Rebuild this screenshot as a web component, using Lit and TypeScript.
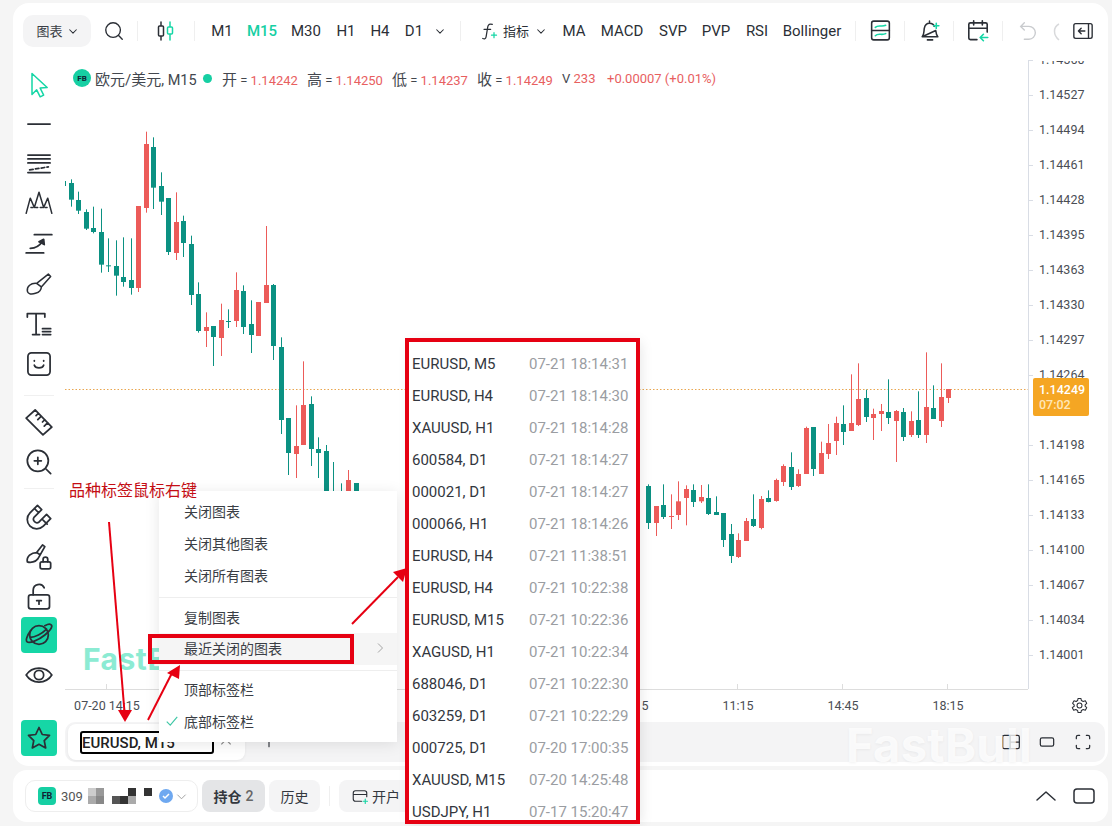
import { LitElement, html, css, svg } from "lit";
import { customElement } from "lit/decorators.js";

type C = [number, number, number, number, number, number];
// x, wickTop, bodyTop, bodyBottom, wickBottom, 1=up(red), in 3x crop coordinates
const A: C[] = [
[34,178,189,239,260,0],[55,215,240,272,282,0],[79,268,276,326,330,0],[100,260,324,336,340,0],[124,266,336,434,458,0],[145,355,436,438,456,0],[169,361,438,467,527,0],[190,352,471,486,500,0],[214,355,480,504,524,0],[235,258,258,504,516,1],[259,35,72,264,278,1],[280,52,81,203,267,0],[304,157,198,245,285,0],[325,234,234,396,405,0],[349,217,306,399,420,1],[370,287,303,369,411,0],[394,347,372,525,555,0],[415,487,522,633,638,0],[439,577,621,633,681,1],[460,618,618,651,738,0],[484,551,600,654,708,1],[505,568,603,605,624,0],[529,457,510,603,621,1],[550,496,513,621,642,0],[574,541,612,645,699,0],[595,546,546,648,648,1],[619,318,495,549,549,1],[640,492,495,678,720,0],[664,652,681,900,942,0],[685,894,894,999,1065,0],[709,856,978,1002,1074,1],[730,724,855,975,975,1],[754,829,852,987,1038,0],[775,952,987,999,1074,0],[799,975,993,1140,1160,0],[820,1026,1150,1160,1180,0],[844,1090,1150,1160,1180,0],[865,1050,1080,1140,1160,1],[889,1089,1089,1140,1160,0]];
const B: C[] = [
[55,433,438,549,567,0],[79,498,498,549,588,1],[100,433,495,531,537,0],[124,463,528,530,567,1],[145,424,484,525,540,1],[169,436,447,474,556,1],[190,433,450,486,501,0],[214,435,471,484,489,1],[235,433,474,522,525,0],[259,469,516,525,525,0],[280,519,519,600,621,0],[304,552,582,648,669,0],[325,580,600,651,654,1],[349,534,543,603,603,1],[370,463,537,558,561,0],[394,468,477,564,568,1],[415,451,474,486,487,0],[439,416,420,483,485,1],[460,373,378,426,438,1],[484,337,381,441,450,0],[505,388,402,438,441,1],[529,260,264,402,402,1],[550,261,261,387,408,0],[574,305,339,402,402,1],[595,252,309,342,357,1],[619,230,249,303,345,1],[640,196,252,276,315,0],[664,103,249,273,273,1],[685,70,177,255,258,1],[709,149,174,231,246,0],[730,206,222,234,300,1],[754,192,213,222,273,1],[775,118,216,234,252,0],[799,210,213,243,366,1],[820,204,216,291,303,0],[844,214,243,285,291,1],[865,154,240,285,294,0],[889,37,201,285,309,1],[910,136,204,237,237,0],[934,70,171,243,261,1],[955,147,147,174,189,1]];

const candle = (c: C, ox: number, oy: number) => {
  const x = Math.round(ox + c[0] / 3) + 0.5;
  const col = c[5] ? "#ec5b59" : "#0b9182";
  const y = (v: number) => oy + v / 3;
  return svg`<line x1=${x} x2=${x} y1=${y(c[1])} y2=${y(c[4])} stroke=${col} stroke-width="1"/><rect x=${x - 2.5} y=${y(c[2])} width="5" height=${Math.max(1, (c[3] - c[2]) / 3)} fill=${col}/>`;
};

const prices = [["1.14560",60],["1.14527",95],["1.14494",130],["1.14461",165],["1.14428",200],["1.14395",235],["1.14363",270],["1.14330",305],["1.14297",340],["1.14264",375],["1.14198",445],["1.14165",480],["1.14133",515],["1.14100",550],["1.14067",585],["1.14034",620],["1.14001",655]] as [string, number][];

const recent = [["EURUSD, M5","07-21 18:14:31"],["EURUSD, H4","07-21 18:14:30"],["XAUUSD, H1","07-21 18:14:28"],["600584, D1","07-21 18:14:27"],["000021, D1","07-21 18:14:27"],["000066, H1","07-21 18:14:26"],["EURUSD, H4","07-21 11:38:51"],["EURUSD, H4","07-21 10:22:38"],["EURUSD, M15","07-21 10:22:36"],["XAGUSD, H1","07-21 10:22:34"],["688046, D1","07-21 10:22:30"],["603259, D1","07-21 10:22:29"],["000725, D1","07-20 17:00:35"],["XAUUSD, M15","07-20 14:25:48"],["USDJPY, H1","07-17 15:20:47"]];

const ic = (w: number, body: unknown) => html`<svg class="ic" width=${w} height=${w} viewBox="0 0 24 24" fill="none" stroke="#2b2f36" stroke-width="1.5" stroke-linecap="round" stroke-linejoin="round">${body}</svg>`;
const TEAL = "#16d6a6";
const chev = svg`<path d="M4 9l8 8 8-8" stroke-width="2.500"/>`;

@customElement("app-root")
export class AppRoot extends LitElement {
  static styles = css`
    :host { display: block; position: relative; width: 1112px; height: 826px; overflow: hidden; background: #f5f5f5; font-family: Roboto, "Noto Sans CJK SC", sans-serif; color: #2b2f36; }
    .page { display: flex; flex-direction: column; gap: 4px; padding: 3px 4px 4px 13px; height: 826px; box-sizing: border-box; }
    .main { flex: none; height: 763px; background: #fff; border-radius: 16px; display: flex; flex-direction: column; overflow: hidden; }
    .toolbar { flex: none; height: 54px; display: flex; align-items: center; font-size: 15px; padding: 1px 0 0 10px; box-sizing: border-box; }
    .t { flex: none; display: flex; align-items: center; justify-content: center; height: 32px; box-sizing: border-box; white-space: nowrap; }
    .chartbtn { width: 68px; background: #f4f4f5; border-radius: 10px; gap: 5px; font-size: 13px; color: #3a3e45; }
    .sep { flex: none; width: 1px; height: 20px; background: #efefef; }
    .teal { color: #16cfa3; font-weight: 500; }
    .w46 { width: 46px; } .w56 { width: 56px; } .w48 { width: 48px; } .w49 { width: 49px; }
    .gap7 { width: 7px; } .gap10 { width: 10px; } .gap8 { width: 8px; } .gap9 { width: 9px; }
    .more { width: 20px; }
    .fx { width: 42px; justify-content: flex-end; padding-right: 4px; }
    .ind { width: 43px; justify-content: flex-start; gap: 7px; font-size: 13px; }
    .redo { width: 10px; justify-content: flex-start; overflow: hidden; }
    .collapse { width: 32px; justify-content: flex-end; }
    .body { flex: 1; display: flex; min-height: 0; }
    .tools { flex: none; width: 52px; padding-top: 7px; display: flex; flex-direction: column; align-items: center; box-sizing: border-box; }
    .tool { flex: none; width: 36px; height: 40px; display: flex; align-items: center; justify-content: center; }
    .tool.active { height: 36px; margin: 1px 0 2px; background: #16d6a6; border-radius: 4px; }
    .mt6 { margin-top: 6px; } .mt7 { margin-top: 7px; }
    .tsep { flex: none; width: 30px; height: 1px; background: #f0f0f0; margin-top: 6px; }
    .tsep.first { margin-top: 11px; }
    .chart { flex: 1; position: relative; }
    .chart svg.plot { position: absolute; left: -65px; top: -57px; width: 1112px; height: 826px; overflow: visible; pointer-events: none; }
    .legend { position: absolute; left: 8px; top: 12px; display: flex; align-items: center; font-size: 13px; white-space: nowrap; color: #43474e; height: 18px; }
    .z { font-size: 15px; }
    .fb { flex: none; width: 18px; height: 18px; border-radius: 50%; background: #16cfa3; color: #123; font-size: 8px; font-weight: 700; display: flex; align-items: center; justify-content: center; margin-right: 4px; }
    .name { flex: none; width: 102px; font-size: 14.5px; }
    .dot { flex: none; width: 9px; height: 9px; border-radius: 50%; background: #16cfa3; margin: 0 10px 0 6px; }
    .legend b { font-weight: 400; color: #e8605f; }
    .g { flex: none; width: 85px; }
    .g.v { width: 45px; }
    .mark { position: absolute; left: 18px; top: 584px; font: 700 30px Inter, sans-serif; color: #8cebd3; letter-spacing: 0.5px; white-space: nowrap; }
    .ptag { position: absolute; left: 968px; top: 321px; width: 56px; height: 38px; background: #f5a623; color: #fff; font-size: 12.5px; font-weight: 500; line-height: 15px; padding: 4px 0 0 6px; box-sizing: border-box; border-radius: 2px; }
    .ptag span { color: #ffe6b8; }
    .labels { position: absolute; left: 970px; top: 4px; width: 56px; height: 630px; overflow: hidden; }
    .plabel { position: absolute; left: 4px; font-size: 12.5px; color: #4a4e55; line-height: 14px; }
    .tlabel { position: absolute; top: 641px; font-size: 12.5px; color: #4a4e55; transform: translateX(-50%); white-space: nowrap; }
    .gear { position: absolute; left: 1006px; top: 640px; }
    .tabrow { flex: none; height: 44px; display: flex; align-items: flex-start; }
    .star { flex: none; width: 36px; height: 36px; margin: -2px 8px 0; background: #16d6a6; border-radius: 4px; display: flex; align-items: center; justify-content: center; }
    .tabstrip { flex: 1; height: 40px; margin-right: 3px; background: #f4f4f5; border-radius: 10px; display: flex; align-items: center; padding-left: 3px; }
    .tab { flex: none; width: 177px; height: 36px; background: #fff; border-radius: 8px; display: flex; align-items: center; padding-left: 12px; box-sizing: border-box; box-shadow: 0 1px 3px rgba(0,0,0,.06); }
    .tabname { width: 134px; height: 23px; box-sizing: border-box; border: 2px solid #000; border-radius: 3px; font-size: 15px; font-weight: 500; line-height: 20px; margin-right: 5px; color: #222; white-space: nowrap; overflow: hidden; }
    .plus { flex: none; margin-left: 15px; }
    .spacer { flex: 1; }
    .tabicons { display: flex; gap: 16px; margin-right: 12px; }
    .bottom { flex: none; height: 52px; background: #fff; border-radius: 14px; display: flex; align-items: center; padding: 0 12px; gap: 4px; }
    .acct { flex: none; width: 173px; height: 32px; border: 1px solid #eee; border-radius: 10px; box-sizing: border-box; display: flex; align-items: center; padding-left: 12px; position: relative; font-size: 13px; color: #555; }
    .badge { position: absolute; left: 132px; top: 7px; }
    .achev { position: absolute; left: 150px; top: 10px; }
    .fbs { flex: none; width: 18px; height: 18px; border-radius: 4px; background: #16cfa3; color: #123; font-size: 9px; font-weight: 700; display: flex; align-items: center; justify-content: center; margin-right: 5px; }
    .mosaic { display: grid; grid-template-columns: repeat(9, 8px); grid-auto-rows: 8px; margin-left: 5px; }
    .btn { flex: none; height: 32px; border-radius: 8px; background: #f4f4f5; display: flex; align-items: center; justify-content: center; font-size: 14px; color: #33373e; }
    .btn.on { width: 63px; background: #e4e5e7; font-weight: 700; gap: 4px; }
    .btn.on span { font-weight: 500; color: #666; }
    .hist { width: 51px; }
    .bsep { margin: 0 5px; }
    .open { width: 100px; gap: 3px; justify-content: flex-start; padding-left: 12px; box-sizing: border-box; }
    .gap14 { flex: none; width: 6px; }
    .menu { position: absolute; left: 159px; top: 491px; width: 238px; height: 251px; background: #fff; box-shadow: 0 2px 14px rgba(0,0,0,.1); font-size: 14px; color: #3a3e45; padding-top: 5px; box-sizing: border-box; }
    .mi { height: 32px; display: flex; align-items: center; padding: 0 0 2px 25px; box-sizing: border-box; position: relative; }
    .mi.short { height: 31px; }
    .mi.hov { background: #f5f5f5; }
    .mi svg { position: absolute; }
    .marrow { left: 215px; top: 9px; }
    .mcheck { left: 6px; top: 8px; }
    .msep { height: 1px; background: #eee; margin: 5px 0 4px; }
    .msep.a { margin: 5px 0 3px; }
    .sub { position: absolute; left: 407px; top: 340px; width: 231px; height: 482px; background: #fff; box-shadow: 3px 2px 12px rgba(0,0,0,.1); font-size: 15px; overflow: hidden; padding-top: 8px; box-sizing: border-box; }
    .si { height: 32px; display: flex; align-items: center; padding-left: 5px; white-space: nowrap; color: #33373e; }
    .si span:first-child { width: 117px; }
    .si span:last-child { color: #9a9da2; }
    .rbox { position: absolute; box-sizing: border-box; border: 4px solid #e60012; }
    .r1 { left: 405px; top: 338px; width: 235px; height: 486px; }
    .r2 { left: 148px; top: 634px; width: 206px; height: 30px; }
    .note { position: absolute; left: 69px; top: 481px; font-size: 16px; line-height: 20px; color: #c40d14; }
    .over { position: absolute; left: 0; top: 0; width: 1112px; height: 826px; pointer-events: none; }
    .wm { position: absolute; left: 846px; top: 716px; font: 700 47px Inter, sans-serif; color: rgba(255,255,255,.8); text-shadow: 0 1px 3px rgba(0,0,0,.05); letter-spacing: .3px; white-space: nowrap; }
  `;

  private tool(body: unknown, cls = "") {
    return html`<div class="tool ${cls}">${ic(28, body)}</div>`;
  }

  render() {
    const tf = [["M1",40],["M15",40,1],["M30",48],["H1",32],["H4",36],["D1",32]] as [string, number, number?][];
    const ind = [["MA",40],["MACD",56],["SVP",46],["PVP",40],["RSI",42],["Bollinger",68]] as [string, number][];
    const mos = ["#ccc","#999","#fff","#fff","#fff","#333","#fff","#333","#fff","#aaa","#888","#fff","#555","#333","#aaa","#fff","#fff","#fff"];
    return html`
    <div class="page">
      <div class="main">
        <div class="toolbar">
          <div class="t chartbtn">图表 ${ic(10, chev)}</div>
          <div class="t w46">${ic(22, svg`<circle cx="11" cy="11" r="8"/><path d="M17 17l4 4"/>`)}</div>
          <div class="sep"></div>
          <div class="t w56">${ic(24, svg`<path d="M7 3v18"/><rect x="4.500" y="7" width="5" height="10" rx="1" fill="#fff"/><path d="M16 3v18" stroke="${TEAL}"/><rect x="13.500" y="8" width="5" height="7" rx="1" fill="#fff" stroke="${TEAL}"/>`)}</div>
          <div class="sep"></div>
          <div class="t gap7"></div>
          ${tf.map(([n, w, a]) => html`<div class="t ${a ? "teal" : ""}" style="width:${w}px">${n}</div>`)}
          <div class="t more">${ic(10, chev)}</div>
          <div class="t gap10"></div>
          <div class="sep"></div>
          <div class="t fx">${ic(20, svg`<path d="M16 4c-3-1-5 0-5.500 3L8.500 19c-.5 2.500-2 3-4 2M6 10h8"/><path d="M15 17h6M18 14v6" stroke="${TEAL}"/>`)}</div>
          <div class="t ind">指标 ${ic(10, chev)}</div>
          <div class="t gap8"></div>
          ${ind.map(([n, w]) => html`<div class="t" style="width:${w}px">${n}</div>`)}
          <div class="t gap9"></div>
          <div class="sep"></div>
          <div class="t w48">${ic(25, svg`<rect x="3.500" y="3" width="17" height="18" rx="2"/><path d="M3.500 12h17"/><path d="M7 9c3-3 6 0 10-2M7 17c3-3 6 0 10-2" stroke="${TEAL}"/>`)}</div>
          <div class="sep"></div>
          <div class="t w48">${ic(25, svg`<path d="M5 18c2-2 1.500-5 2-8 .5-3 2.500-5 5-5s4 1 4.500 3M18 12c.3 2.500.5 4.500 2 6H5zM10 21h5M12 5V3"/><path d="M16 7.500h5M18.500 5v5" stroke="${TEAL}"/>`)}</div>
          <div class="sep"></div>
          <div class="t w48">${ic(26, svg`<path d="M11 20H5a1.500 1.500 0 0 1-1.500-1.500V6A1.500 1.500 0 0 1 5 4.500h14A1.500 1.500 0 0 1 20.500 6v7M3.500 9.500h17M8 2.500v4M16 2.500v4"/><path d="M21 18h-7M17 15l-3 3 3 3" stroke="${TEAL}"/>`)}</div>
          <div class="sep"></div>
          <div class="t w49"><svg width="22" height="22" viewBox="0 0 24 24" fill="none" stroke="#c9cbce" stroke-width="1.500" stroke-linecap="round"><path d="M8 3L4 7l4 4M4 7h9a7 7 0 0 1 0 14H8"/></svg></div>
          <div class="t redo"><svg width="10" height="22" viewBox="0 0 10 22" fill="none" stroke="#d8d9db" stroke-width="1.500"><path d="M7 4C1 7 1 15 7 20"/></svg></div>
          <div class="t collapse">${ic(22, svg`<rect x="2" y="4" width="20" height="16" rx="2"/><path d="M18 4v16M14 12H7M10 9l-3 3 3 3"/>`)}</div>
        </div>
        <div class="body">
          <div class="tools">
            ${this.tool(svg`<path d="M6 3l13 12-6 .5 3 6-3 1.500-3-6-4 4z" stroke="${TEAL}" stroke-width="1.300"/>`)}
            ${this.tool(svg`<path d="M2.500 12h19"/>`)}
            ${this.tool(svg`<path d="M2.500 4.300h19M2.500 7.700h19M2.500 11.100h19M2.500 19.300h19"/><path d="M4 17l16-2.500" stroke-dasharray="3 2"/>`)}
            ${this.tool(svg`<path d="M1 20L4.500 7l3.500 8L12 2l4 13 3.500-8L23 20" stroke-width="1.300"/><path d="M5 15h14" stroke-width="1.100" stroke-dasharray="2 2"/>`)}
            ${this.tool(svg`<path d="M8 4h15M1 19.700h15"/><path d="M4.500 15.700c4 0 8-2 10.500-6"/><path d="M12 10l4-2 .5 4.500z" fill="#2b2f36"/>`)}
            ${this.tool(svg`<path d="M20 3.500l2 2-8 9-4-3zM10 11.500C5 11 1.500 14 2 18c.5 3 4 3 7 2 3-1 5-3 5-5.500" stroke-width="1.300"/>`)}
            ${this.tool(svg`<path d="M2 3h15M2 3v3M17 3v3M9.500 3v18M6.500 21h6M15 16h7M15 18.500h7M15 21h7"/>`)}
            ${this.tool(svg`<rect x="2.500" y="2.500" width="19" height="19" rx="3"/><path d="M8 13c1 3 7 3 8 0M8 9v.5M16 9v.5"/>`)}
            <div class="tsep first"></div>
            ${this.tool(svg`<path d="M1 8.600L8.700 1.700 23 16.300 15.400 23.100zM11.500 4.500l-2 2M14 7l-3 3M17 10l-2 2M19.500 12.500l-3 3"/>`, "mt6")}
            ${this.tool(svg`<circle cx="11" cy="11" r="9"/><path d="M11 8v6M8 11h6M18 18l4 4"/>`)}
            <div class="tsep"></div>
            ${this.tool(svg`<path d="M10.700 2.900L4.300 9.300A8 8 0 0 0 15.700 20.700L22 14.300 18.500 10.700 12.100 17.100A3 3 0 0 1 7.900 12.900L14.300 6.500zM8 5.500l3.500 3.500M15.500 15.500l3.500 3.500"/>`, "mt7")}
            ${this.tool(svg`<path d="M15 2.500l2 1.500-4 7-3-2zM10 9C5.500 9 1 12.500 2 17c3 1 7 0 9-2.500l2-3.500M15.500 17v-2a2 2 0 0 1 4 0v2"/><rect x="13" y="17" width="9" height="6" rx="1.500"/>`)}
            ${this.tool(svg`<path d="M7 11V7a5 5 0 0 1 9.500-2"/><rect x="3" y="11" width="18" height="12" rx="2"/><path d="M10 16h4M12 16v3"/>`)}
            ${this.tool(svg`<ellipse cx="12" cy="12" rx="8" ry="8"/><path d="M5 8C2 12 0 17 2 18s9-1 15-6 7-8 5-9c-1-.5-3 0-5 1"/><path d="M4.500 14c4 0 10-3 14-7"/>`, "active")}
            ${this.tool(svg`<path d="M1 12c5-8 17-8 22 0-5 8-17 8-22 0z"/><circle cx="12" cy="12" r="4"/>`)}
          </div>
          <div class="chart">
            <svg class="plot" viewBox="0 0 1112 826">
              <line x1="65" x2="1028" y1="389.500" y2="389.500" stroke="#e9a650" stroke-dasharray="1.500 2"/>
              <rect x="65" y="181" width="1" height="5" fill="#0b9182"/>
              ${A.map((c) => candle(c, 60, 120))}
              ${B.map((c) => candle(c, 630, 340))}
              <line x1="1028.500" x2="1028.500" y1="61" y2="689" stroke="#d9dde5"/>
              <line x1="65" x2="1028" y1="689.500" y2="689.500" stroke="#ddd"/>
              ${prices.map(([, y]) => svg`<line x1="1028" x2="1033" y1=${y + 0.5} y2=${y + 0.5} stroke="#d9dde5"/>`)}
              ${[107, 738, 843, 948].map((x) => svg`<line x1=${x - 0.5} x2=${x - 0.5} y1="684" y2="689" stroke="#ddd"/>`)}
            </svg>
            <div class="legend">
              <div class="fb">FB</div><span class="name"><span class="z">欧元/美元</span>, M15</span><div class="dot"></div>
              <span class="g"><span class="z">开</span> = <b>1.14242</b></span><span class="g"><span class="z">高</span> = <b>1.14250</b></span><span class="g"><span class="z">低</span> = <b>1.14237</b></span><span class="g"><span class="z">收</span> = <b>1.14249</b></span><span class="g v">V <b>233</b></span><b>+0.00007 (+0.01%)</b>
            </div>
            <div class="labels">
              ${prices.map(([p, y]) => html`<div class="plabel" style="top:${y - 68}px">${p}</div>`)}
            </div>
            <div class="ptag">1.14249<br /><span>07:02</span></div>
            <div class="mark">FastB</div>
            ${[["07-20 14:15", 42], ["5", 580], ["11:15", 673], ["14:45", 778], ["18:15", 883]].map(([t, x]) => html`<div class="tlabel" style="left:${x}px">${t}</div>`)}
            <div class="gear">${ic(17, svg`<circle cx="12" cy="12" r="3.500"/><path d="M10 2h4l.7 3 2.500 1.400 3-1 2 3.500-2.200 2.100v2l2.200 2.100-2 3.500-3-1-2.500 1.400-.7 3h-4l-.7-3-2.500-1.400-3 1-2-3.500L4.500 13v-2L2.300 8.900l2-3.500 3 1L9.300 5z"/>`)}</div>
          </div>
        </div>
        <div class="tabrow">
          <div class="star">${ic(28, svg`<path d="M12 3l2.800 6 6.200.8-4.500 4.400 1.200 6.300L12 17.400l-5.700 3.100 1.200-6.300L3 9.800 9.200 9z"/>`)}</div>
          <div class="tabstrip">
            <div class="tab">
              <div class="tabname">EURUSD, M15</div>
              <svg width="14" height="14" viewBox="0 0 24 24" fill="none" stroke="#888" stroke-width="2"><path d="M4 16l8-8 8 8"/></svg>
            </div>
            <div class="plus">${ic(18, svg`<path d="M12 3v18M3 12h18"/>`)}</div>
            <div class="spacer"></div>
            <div class="tabicons">
              ${ic(20, svg`<rect x="2" y="4" width="20" height="16" rx="2"/><path d="M11 4v16M11 12h11"/>`)}
              ${ic(20, svg`<rect x="4" y="7" width="16" height="10" rx="2"/>`)}
              ${ic(20, svg`<path d="M4 8V6a2 2 0 0 1 2-2h2M16 4h2a2 2 0 0 1 2 2v2M20 16v2a2 2 0 0 1-2 2h-2M8 20H6a2 2 0 0 1-2-2v-2"/>`)}
            </div>
          </div>
        </div>
      </div>
      <div class="bottom">
        <div class="acct">
          <div class="fbs">FB</div><span>309</span>
          <div class="mosaic">${mos.map((c) => html`<i style="background:${c}"></i>`)}</div>
          <svg class="badge" width="16" height="16" viewBox="0 0 16 16"><circle cx="8" cy="8" r="7" fill="#6ea8f0"/><path d="M5 8l2 2 4-4" stroke="#fff" stroke-width="1.500" fill="none"/></svg>
          <svg class="achev" width="11" height="11" viewBox="0 0 24 24" fill="none" stroke="#999" stroke-width="2"><path d="M3 8l9 9 9-9"/></svg>
        </div>
        <div class="btn on">持仓 <span>2</span></div>
        <div class="btn hist">历史</div>
        <div class="sep bsep"></div>
        <div class="btn open">${ic(18, svg`<path d="M21 13V8a3 3 0 0 0-3-3H6a3 3 0 0 0-3 3v8a3 3 0 0 0 3 3h8M3 10h18"/><path d="M16 19h6M19 16v6" stroke="${TEAL}"/>`)}开户</div>
        <div class="spacer"></div>
        ${ic(24, svg`<path d="M3 16l9-8 9 8"/>`)}
        <div class="gap14"></div>
        ${ic(24, svg`<rect x="2" y="5" width="20" height="14" rx="3"/>`)}
      </div>
    </div>

    <div class="wm">FastBull</div>
    <div class="menu">
      <div class="mi">关闭图表</div>
      <div class="mi">关闭其他图表</div>
      <div class="mi">关闭所有图表</div>
      <div class="msep"></div>
      <div class="mi short">复制图表</div>
      <div class="mi hov">最近关闭的图表
        <svg class="marrow" width="12" height="12" viewBox="0 0 24 24" fill="none" stroke="#888" stroke-width="1.500"><path d="M8 3l9 9-9 9"/></svg>
      </div>
      <div class="msep a"></div>
      <div class="mi">顶部标签栏</div>
      <div class="mi">
        <svg class="mcheck" width="14" height="14" viewBox="0 0 24 24" fill="none" stroke="#3fc7a6" stroke-width="2"><path d="M3 13l6 6L21 5"/></svg>
        底部标签栏
      </div>
    </div>
    <div class="sub">
      ${recent.map(([a, b]) => html`<div class="si"><span>${a}</span><span>${b}</span></div>`)}
    </div>
    <div class="rbox r1"></div>
    <div class="rbox r2"></div>
    <div class="note">品种标签鼠标右键</div>
    <svg class="over" viewBox="0 0 1112 826">
      <path d="M109 522L124.500 712" stroke="#e60012" stroke-width="2" fill="none"/>
      <path d="M118 710h14l-7 12z" fill="#e60012"/>
      <path d="M148 720L172 673" stroke="#e60012" stroke-width="2" fill="none"/>
      <path d="M180 665l-1 14-12-6z" fill="#e60012"/>
      <path d="M352 624L398 577" stroke="#e60012" stroke-width="2" fill="none"/>
      <path d="M407 568l-4 14-10-10z" fill="#e60012"/>
    </svg>
    `;
  }
}
